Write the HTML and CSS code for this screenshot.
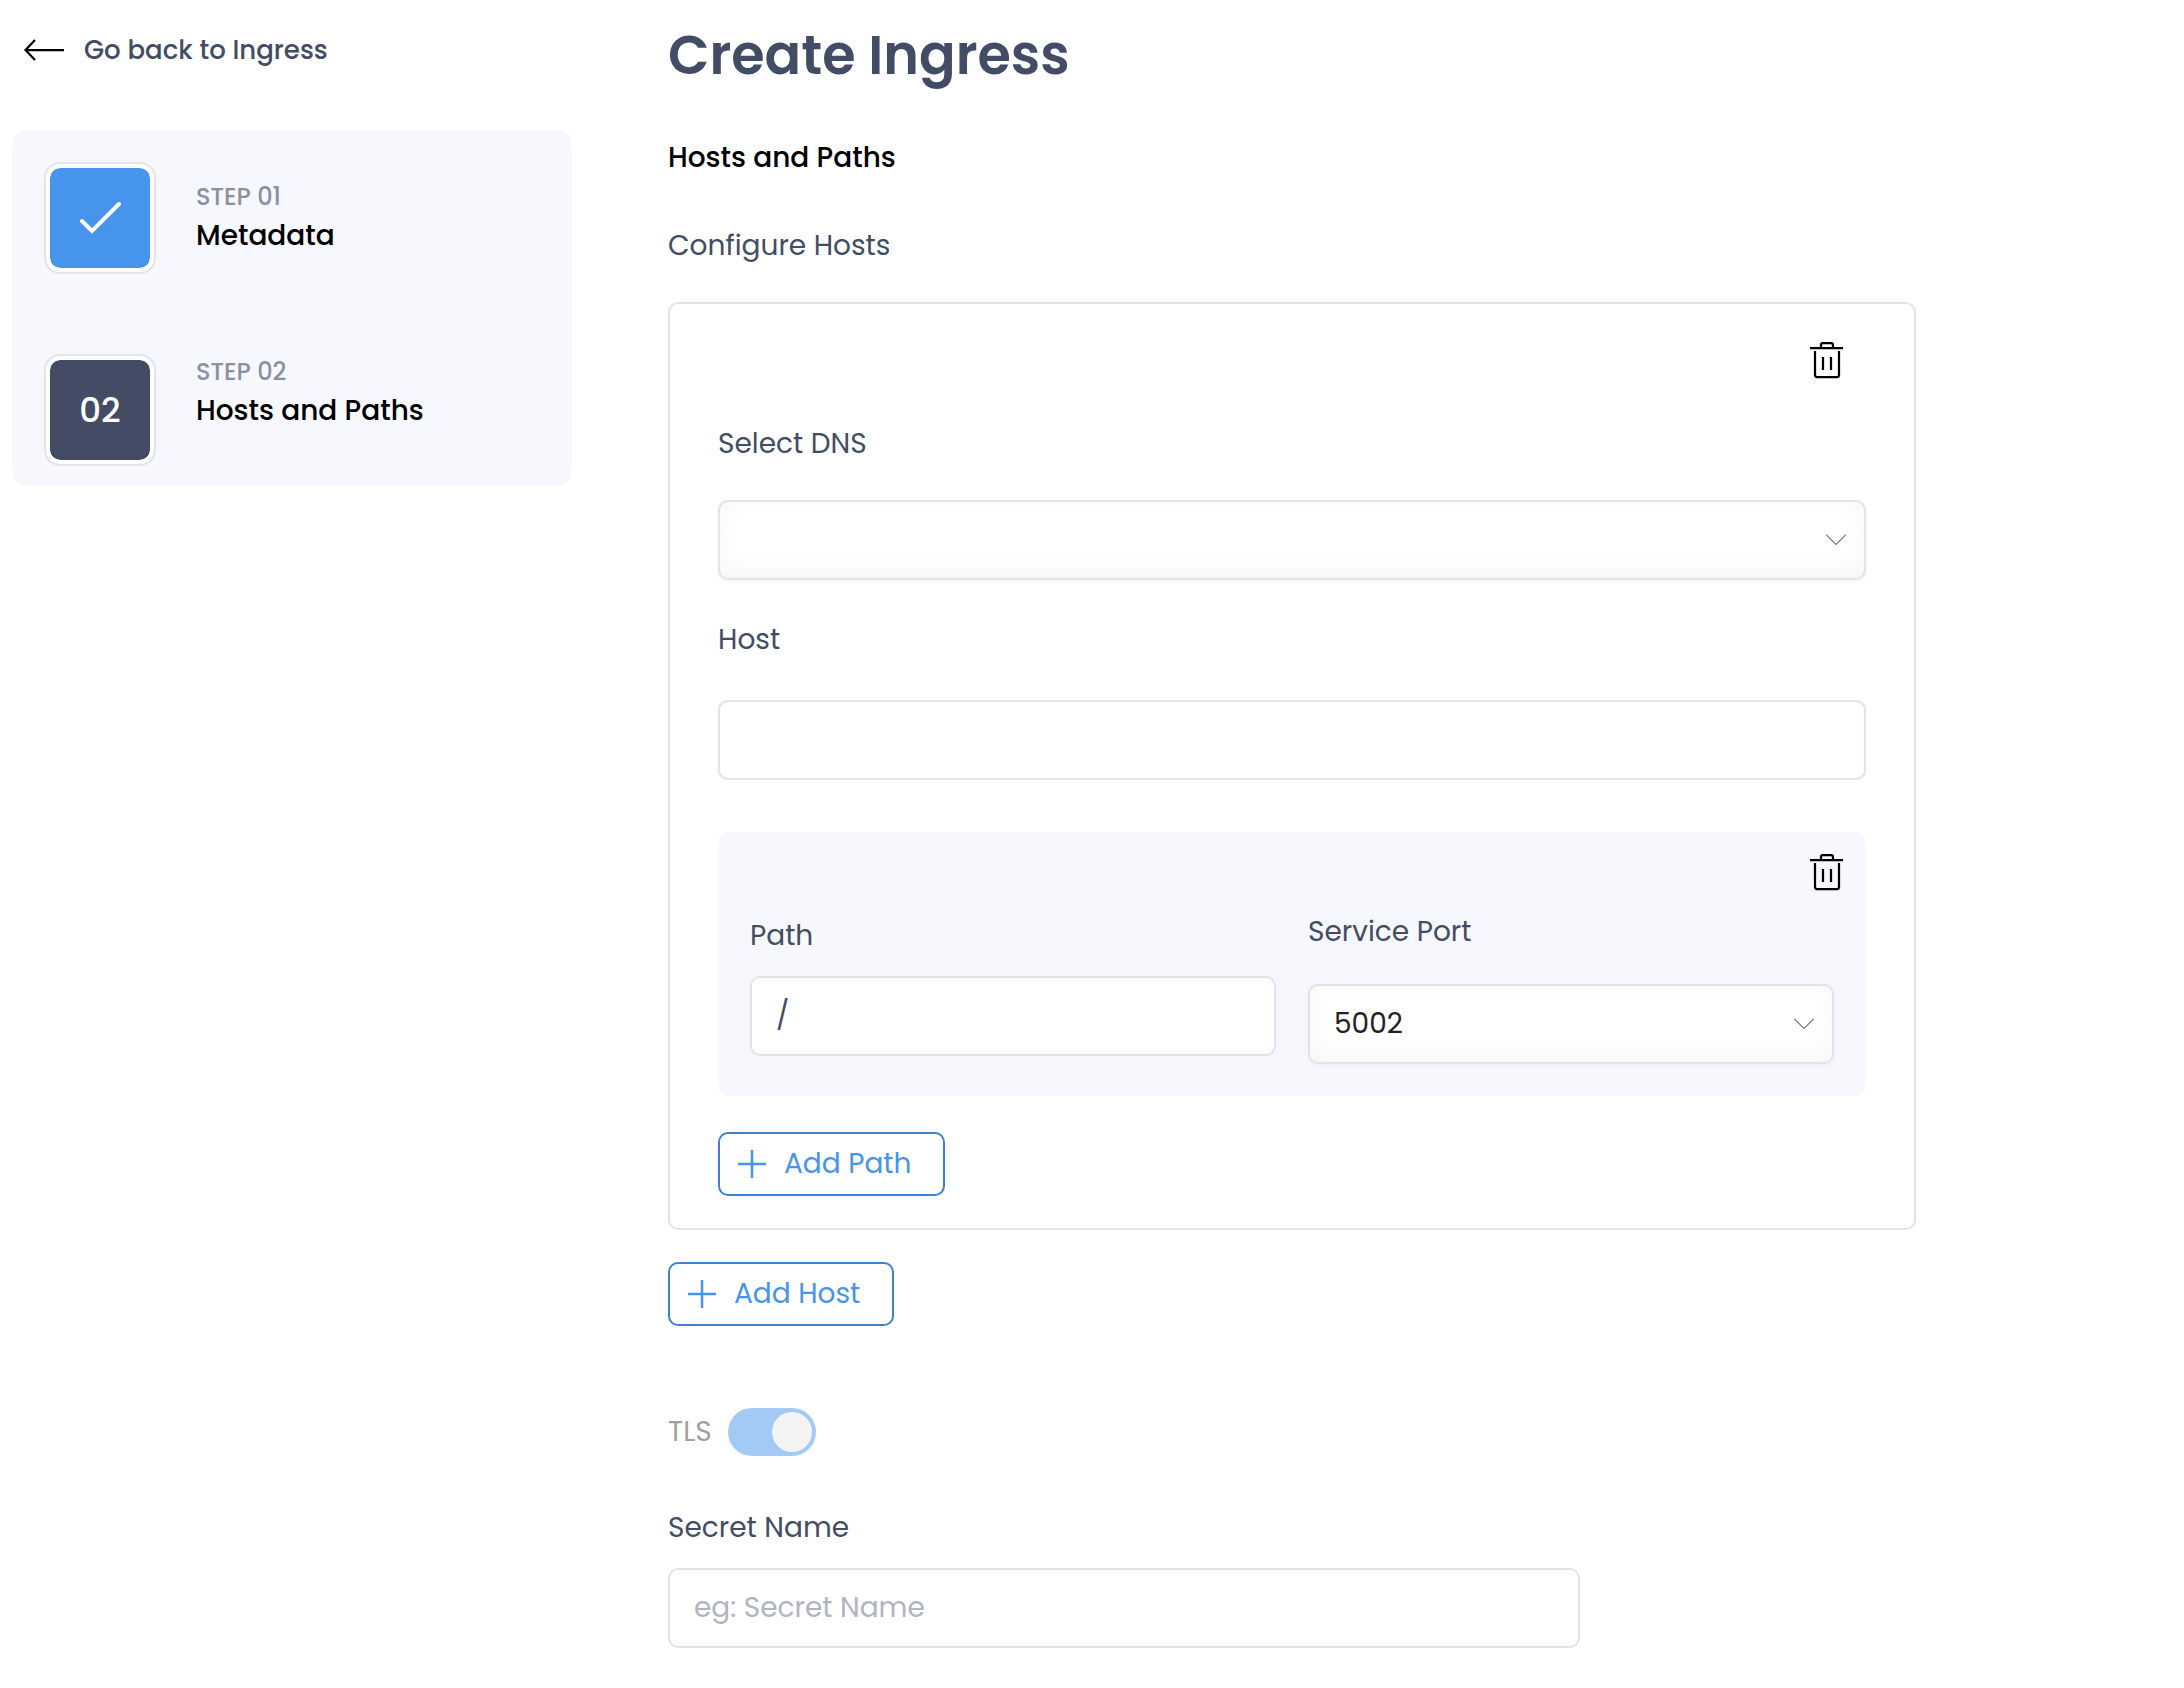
FILE: index.html
```html
<!DOCTYPE html>
<html lang="en">
<head>
<meta charset="utf-8">
<meta name="viewport" content="width=device-width, initial-scale=1">
<title>Create Ingress</title>
<link rel="stylesheet" href="styles.css">
</head>
<body>
<div class="page">
  <aside class="sidebar">
    <a class="back" href="#">
      <svg width="40" height="22" viewBox="0 0 40 22" fill="none" stroke="currentColor" stroke-width="2.25" aria-hidden="true"><path d="M40 11H1.500M11 1L1.500 11L11 21"/></svg>
      <span>Go back to Ingress</span>
    </a>
    <ol class="steps">
      <li class="step">
        <span class="badge badge-done">
          <svg width="100" height="100" viewBox="0 0 100 100" fill="none" stroke="currentColor" stroke-width="4" stroke-linecap="round" aria-hidden="true"><path d="M32 53L42 63L69 36"/></svg>
        </span>
        <span class="step-text"><span class="step-label">STEP 01</span><span class="step-name">Metadata</span></span>
      </li>
      <li class="step step-current">
        <span class="badge">02</span>
        <span class="step-text"><span class="step-label">STEP 02</span><span class="step-name">Hosts and Paths</span></span>
      </li>
    </ol>
  </aside>

  <main class="main">
    <h1 class="title">Create Ingress</h1>
    <h2 class="section">Hosts and Paths</h2>
    <form>
      <fieldset class="hosts">
        <legend class="legend">Configure Hosts</legend>
        <div class="card">
          <button class="trash" type="button" aria-label="Delete host">
            <svg width="34" height="37" viewBox="0 0 34 37" fill="none" stroke="currentColor" stroke-width="2.25" aria-hidden="true"><path d="M0 6H33M11 6V3a2 2 0 0 1 2-2h8a2 2 0 0 1 2 2v3M5 9v24a2 2 0 0 0 2 2h20a2 2 0 0 0 2-2V9M13 15v13M21 15v13"/></svg>
          </button>
          <div class="field field-dns">
            <label for="dns">Select DNS</label>
            <div class="select">
              <select id="dns"><option></option></select>
              <svg class="chevron" width="20" height="12" viewBox="0 0 20 12" fill="none" stroke="currentColor" aria-hidden="true"><path d="M0 .5L10 10.500L20 .5"/></svg>
            </div>
          </div>
          <div class="field field-host">
            <label for="host">Host</label>
            <input class="input" id="host" type="text">
          </div>
          <div class="panel">
            <button class="trash" type="button" aria-label="Delete path">
              <svg width="34" height="37" viewBox="0 0 34 37" fill="none" stroke="currentColor" stroke-width="2.25" aria-hidden="true"><path d="M0 6H33M11 6V3a2 2 0 0 1 2-2h8a2 2 0 0 1 2 2v3M5 9v24a2 2 0 0 0 2 2h20a2 2 0 0 0 2-2V9M13 15v13M21 15v13"/></svg>
            </button>
            <div class="pair">
              <div class="field field-path">
                <label for="path">Path</label>
                <input class="input" id="path" type="text" value="/">
              </div>
              <div class="field field-port">
                <label for="port">Service Port</label>
                <div class="select">
                  <select id="port"><option>5002</option></select>
                  <svg class="chevron" width="20" height="12" viewBox="0 0 20 12" fill="none" stroke="currentColor" aria-hidden="true"><path d="M0 .5L10 10.500L20 .5"/></svg>
                </div>
              </div>
            </div>
          </div>
          <button class="add" type="button">
            <svg width="28" height="28" viewBox="0 0 28 28" fill="none" stroke="currentColor" stroke-width="2.5" aria-hidden="true"><path d="M14 0V28M0 14H28"/></svg>
            Add Path
          </button>
        </div>
      </fieldset>
      <button class="add" type="button">
        <svg width="28" height="28" viewBox="0 0 28 28" fill="none" stroke="currentColor" stroke-width="2.5" aria-hidden="true"><path d="M14 0V28M0 14H28"/></svg>
        Add Host
      </button>
      <div class="tls">
        <label for="tls">TLS</label>
        <input class="switch" id="tls" type="checkbox" checked disabled>
      </div>
      <div class="field field-secret">
        <label for="secret">Secret Name</label>
        <input class="input" id="secret" type="text" placeholder="eg: Secret Name">
      </div>
    </form>
  </main>
</div>
</body>
</html>
```
FILE: styles.css
```css
*, *::before {
  box-sizing: border-box;
}

body {
  margin: 0;
  background: #fff;
  color: #434c65;
  font: 400 28px/42px Poppins, Inter, sans-serif;
}

button, input, select {
  font: inherit;
  color: inherit;
}

.page {
  display: grid;
  grid-template-columns: 560px minmax(0, 1248px);
  gap: 96px;
  padding: 12px;
}

/* Sidebar */
.back {
  display: flex;
  align-items: center;
  gap: 20px;
  padding: 18px 12px 0;
  margin-bottom: 60px;
  color: #434c65;
  font-size: 26px;
  line-height: 40px;
  font-weight: 500;
  text-decoration: none;
}

.back svg {
  color: #000;
}

.steps {
  display: grid;
  gap: 80px;
  margin: 0;
  padding: 32px 32px 20px;
  list-style: none;
  background: #f7f8fe;
  border-radius: 16px;
}

.step {
  display: flex;
  align-items: center;
  gap: 40px;
}

.step-current {
  align-items: flex-start;
}

.badge {
  display: grid;
  place-items: center;
  width: 112px;
  height: 112px;
  border: 2px solid #e3e4ea;
  border-radius: 16px;
  background: #444c65 content-box;
  padding: 4px;
  box-shadow: inset 0 0 0 4px #fff;
  color: #fff;
  font-size: 34px;
  font-weight: 500;
}

.badge-done {
  background-color: #4694ec;
}

.step-text {
  display: grid;
}

.step-label {
  color: #8b90a2;
  font-size: 24px;
  line-height: 36px;
  font-weight: 500;
}

.step-name {
  color: #000;
  font-weight: 500;
}

/* Form */
.title {
  margin: 0 0 40px;
  padding-top: 1px;
  font-size: 54px;
  line-height: 84px;
  font-weight: 600;
}

.section {
  margin: 0 0 46px;
  color: #000;
  font-size: 28px;
  font-weight: 500;
}

.hosts {
  min-width: 0;
  margin: 0 0 32px;
  padding: 0;
  border: 0;
}

.legend {
  padding: 0 0 35px;
}

.card {
  display: flex;
  flex-direction: column;
  padding: 38px 48px 32px;
  border: 2px solid #e2e2ea;
  border-radius: 10px;
}

.trash {
  display: block;
  align-self: flex-end;
  margin-right: 22px;
  padding: 0;
  border: 0;
  background: none;
  color: #000;
}

.trash svg {
  display: block;
}

.field {
  display: flex;
  flex-direction: column;
  gap: 19px;
}

.field-dns {
  gap: 35px;
  margin: 44px 0 39px;
}

.field-host {
  gap: 39px;
}

.field-port {
  gap: 31px;
}

.input, .select select {
  display: block;
  width: 100%;
  height: 80px;
  padding: 0 24px;
  border: 2px solid #e2e2ea;
  border-radius: 10px;
  background: #fff;
}

.input::placeholder {
  color: #b2b4c1;
  opacity: 1;
}

.select {
  position: relative;
}

.select select {
  appearance: none;
  color: #222;
  box-shadow: inset 0 -6px 24px rgba(0, 0, 0, 0.04), 0 2px 4px rgba(0, 0, 0, 0.04);
}

.chevron {
  position: absolute;
  top: 34px;
  right: 20px;
  color: #222;
  pointer-events: none;
}

.panel {
  display: flex;
  flex-direction: column;
  margin: 52px 0 36px;
  padding: 22px 0 32px;
  border-radius: 10px;
  background: #f7f8fe;
}

.pair {
  display: grid;
  grid-template-columns: 1fr 1fr;
  gap: 32px;
  margin-top: 20px;
  padding: 0 32px;
}

.field-path {
  padding-top: 4px;
}

.add {
  display: flex;
  align-items: center;
  align-self: flex-start;
  gap: 18px;
  min-width: 226px;
  height: 64px;
  padding: 0 32px 0 18px;
  border: 2px solid #3c80d8;
  border-radius: 10px;
  background: #fff;
  color: #4694ec;
}

.tls {
  display: flex;
  align-items: center;
  gap: 16px;
  margin: 82px 0 51px;
  color: #a0a0a0;
}

.switch {
  appearance: none;
  display: flex;
  justify-content: flex-end;
  width: 88px;
  height: 48px;
  margin: 0;
  padding: 4px;
  border-radius: 24px;
  background: #a3c9f5;
}

.switch::before {
  content: "";
  width: 40px;
  height: 40px;
  border-radius: 50%;
  background: #f4f4f4;
}

.field-secret {
  max-width: 912px;
}
```
